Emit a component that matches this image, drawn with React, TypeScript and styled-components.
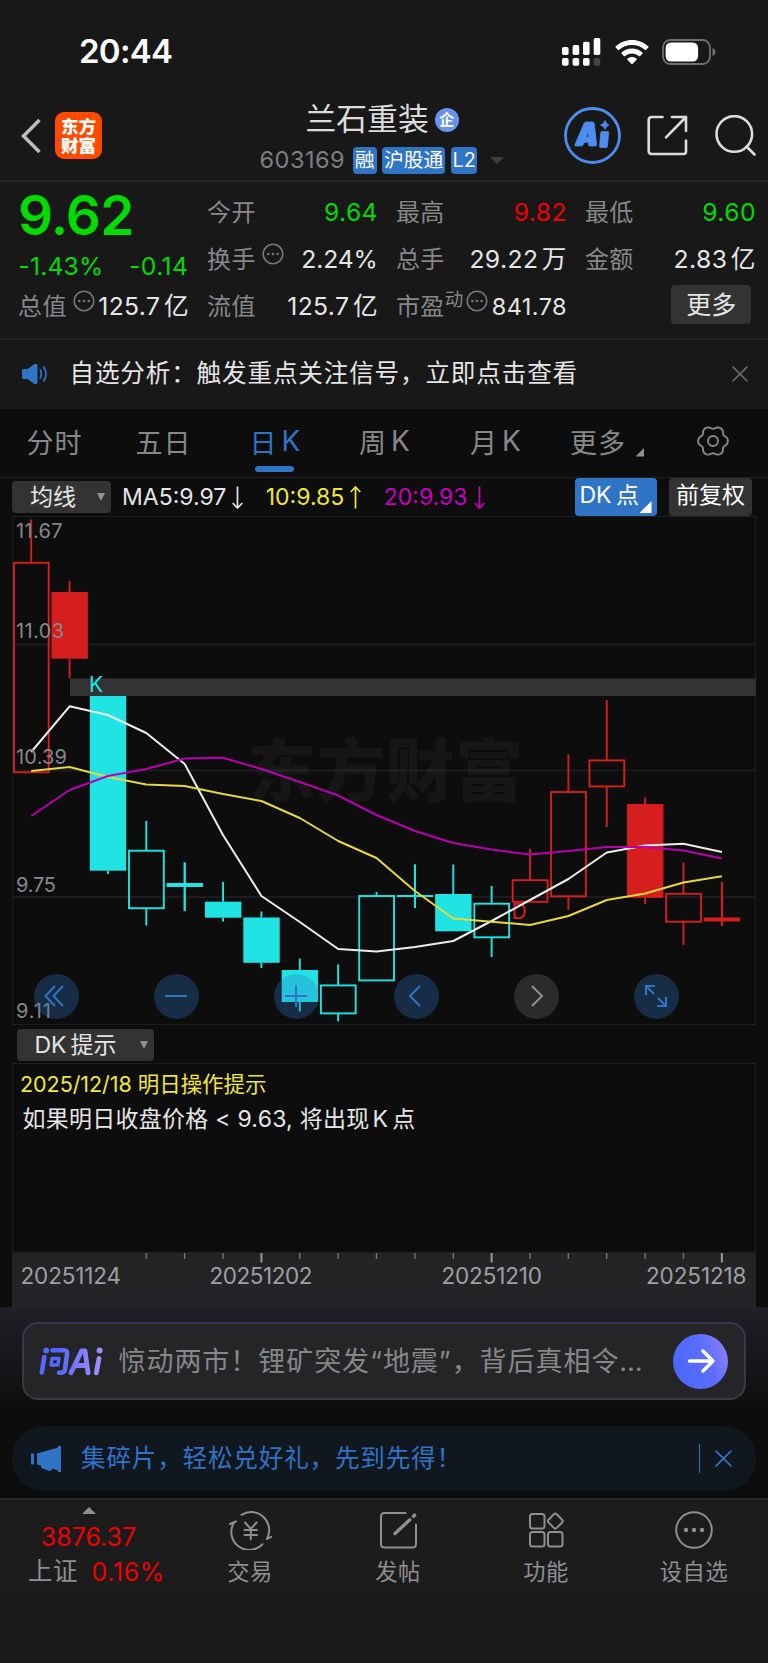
import React from 'react';
import styled, { createGlobalStyle } from 'styled-components';

const BLUE = '#2f74c5';
const GREEN = '#00dc00';
const RED = '#f00000';
const GREY = '#87878c';
const LIGHT = '#e6e6e6';
const CYAN = '#20e4e4';
const CRIMSON = '#d61e1e';
const YELLOW = '#f0e63c';
const MAGENTA = '#c800c0';

const GlobalStyle = createGlobalStyle`
  * { box-sizing: border-box; }
  body { margin: 0; background: #0d0d0d; }
  svg { display: block; flex: none; }
`;

const Screen = styled.div`
  width: 768px;
  height: 1663px;
  display: flex;
  flex-direction: column;
  background: #0d0d0d;
  color: ${LIGHT};
  font-family: Inter, 'Noto Sans CJK SC', sans-serif;
  overflow: hidden;
  white-space: nowrap;
`;

const Text = styled.span<{ $size: number; $color?: string; $ls?: number; $weight?: number; $ml?: number; $pb?: number; $pt?: number }>`
  font-size: ${p => p.$size}px;
  line-height: 1.2;
  color: ${p => p.$color ?? LIGHT};
  letter-spacing: ${p => p.$ls ?? 0}px;
  font-weight: ${p => p.$weight ?? 400};
  margin-left: ${p => p.$ml ?? 0}px;
  padding-top: ${p => p.$pt ?? 0}px;
  padding-bottom: ${p => p.$pb ?? 0}px;
`;

const Latin = styled.span<{ $l?: number; $r?: number }>`
  margin: 0 ${p => p.$r ?? 0}px 0 ${p => p.$l ?? 0}px;
`;

/* ---------- Status bar and header ---------- */

const StatusBar = styled.div`
  height: 84px;
  padding: 20px 52px 0 79px;
  display: flex;
  align-items: center;
  justify-content: space-between;
  background: #181818;
`;

const StatusIcons = styled.div`
  display: flex;
  align-items: center;
  gap: 13.5px;
`;

const Header = styled.header`
  height: 98px;
  display: grid;
  grid-template-columns: 260px 250px 1fr;
  background: #181818;
  border-bottom: 2px solid #262626;
`;

const HeaderLeft = styled.div`
  display: flex;
  align-items: center;
  gap: 14.5px;
  padding: 7px 0 0 20.5px;
`;

const AppLogo = styled.div`
  width: 47px;
  height: 47px;
  border-radius: 9px;
  background: #ff4a00;
  color: #fff;
  font-size: 17.5px;
  line-height: 19px;
  font-weight: 900;
  display: flex;
  flex-direction: column;
  align-items: center;
  justify-content: center;
`;

const HeaderCenter = styled.div`
  display: flex;
  flex-direction: column;
`;

const TitleRow = styled.div`
  display: flex;
  align-items: center;
  height: 42px;
  margin-top: 14.5px;
  padding-left: 45.5px;
`;

const CompanyBadge = styled.span`
  width: 24px;
  height: 24px;
  margin-left: 6px;
  border-radius: 50%;
  background: #6a92f0;
  color: #fff;
  font-size: 15px;
  line-height: 23px;
  font-weight: 700;
  text-align: center;
`;

const CodeRow = styled.div`
  display: flex;
  align-items: center;
  height: 28px;
  margin-top: 6px;
  padding-right: 6px;
`;

const Tag = styled.span<{ $w: number; $ml: number }>`
  width: ${p => p.$w}px;
  margin-left: ${p => p.$ml}px;
  height: 27px;
  border-radius: 4px;
  background: ${BLUE};
  color: #fff;
  font-size: 19.8px;
  line-height: 27px;
  text-align: center;
`;

const CaretDown = styled.i<{ $c: string; $s: number; $h: number }>`
  border: solid transparent;
  border-width: ${p => p.$h}px ${p => p.$s}px 0;
  border-top-color: ${p => p.$c};
`;

const HeaderRight = styled.div`
  display: flex;
  align-items: center;
  padding: 7px 0 0 54px;
`;

/* ---------- Quote ---------- */

const Quote = styled.section`
  height: 158px;
  padding: 7px 13px 0 19px;
  display: grid;
  grid-template-columns: repeat(4, 169.4px);
  grid-template-rows: repeat(3, 47px);
  column-gap: 19.6px;
  background: #181818;
  border-bottom: 2px solid #202020;
`;

const PriceBlock = styled.div`
  grid-row: span 2;
  display: flex;
  flex-direction: column;
`;

const Price = styled.div`
  height: 52px;
  margin-left: -1px;
  font-size: 55px;
  line-height: 53px;
  font-weight: 600;
  letter-spacing: -0.9px;
  color: ${GREEN};
`;

const ChangeRow = styled.div`
  display: flex;
  justify-content: space-between;
  align-items: center;
  height: 32px;
  margin-top: 10px;
`;

const Cell = styled.div`
  display: flex;
  align-items: center;
  justify-content: space-between;
`;

const CellLabel = styled.span`
  display: flex;
  align-items: center;
  margin-left: -1px;
  padding-bottom: 4px;
  color: ${GREY};
  font-size: 24px;
  letter-spacing: 0.4px;
`;

const CellValue = styled.span<{ $color?: string; $small?: boolean; $tight?: boolean }>`
  margin-right: ${p => (p.$tight ? -0.4 : -0.6)}px;
  padding-top: ${p => (p.$small ? 2 : 0)}px;
  font-size: ${p => (p.$small ? 23.5 : 24.7)}px;
  line-height: 1.2;
  letter-spacing: ${p => (p.$tight ? -0.1 : 0.4)}px;
  color: ${p => p.$color ?? LIGHT};
`;

const Unit = styled.span`
  margin-left: 3.5px;
`;

const SupText = styled.span`
  font-size: 18.5px;
  margin-bottom: 13px;
`;

const MoreButton = styled.button`
  justify-self: end;
  align-self: center;
  width: 80px;
  height: 39px;
  margin-right: 4px;
  margin-top: -4px;
  padding: 0;
  border: 0;
  border-radius: 4px;
  background: #333;
  color: ${LIGHT};
  font: 400 25px/40px Inter, 'Noto Sans CJK SC', sans-serif;
`;

const Alert = styled.section`
  height: 69px;
  display: flex;
  align-items: center;
  padding: 0 20px 2px 22px;
  background: #181818;
`;

const Spacer = styled.span<{ $w?: number }>`
  flex: ${p => (p.$w ? `0 0 ${p.$w}px` : '1')};
`;

/* ---------- Tabs ---------- */

const Tabs = styled.nav`
  height: 69px;
  display: grid;
  grid-template-columns: 109px 109px 114px 105px 117px 110px 98px;
  border-bottom: 1px solid #202020;
`;

const Tab = styled.div<{ $active?: boolean }>`
  display: flex;
  align-items: center;
  justify-content: center;
  padding-bottom: 4px;
  position: relative;
  font-size: 27px;
  letter-spacing: 1px;
  color: ${p => (p.$active ? BLUE : GREY)};
  &::after {
    content: '';
    display: ${p => (p.$active ? 'block' : 'none')};
    position: absolute;
    bottom: 5px;
    left: 37px;
    width: 39px;
    height: 6px;
    border-radius: 3px;
    background: ${BLUE};
  }
`;

const MoreTabLabel = styled.span`
  margin-left: -22px;
`;

const Period = styled.span`
  margin-left: 4px;
  font-size: 28px;
  letter-spacing: 0;
`;

const Corner = styled.i<{ $c: string; $s: number }>`
  position: absolute;
  width: ${p => p.$s}px;
  height: ${p => p.$s}px;
  background: ${p => p.$c};
  clip-path: polygon(100% 0, 100% 100%, 0 100%);
`;

const TabCorner = styled(Corner)`
  right: 20px;
  top: 39px;
`;

const ToggleCorner = styled(Corner)`
  right: 5px;
  bottom: 3px;
`;

/* ---------- Chart ---------- */

const MaRow = styled.div`
  height: 38px;
  display: flex;
  align-items: center;
  padding: 0 16px 0 12px;
`;

const Select = styled.div<{ $w: number; $pl: number; $pr: number }>`
  width: ${p => p.$w}px;
  height: 32px;
  padding: 0 ${p => p.$pr}px 0 ${p => p.$pl}px;
  display: flex;
  align-items: center;
  justify-content: space-between;
  border-radius: 4px;
  background: #333;
`;

const MaValue = styled.span<{ $color: string; $ml: number }>`
  display: flex;
  align-items: center;
  margin-left: ${p => p.$ml}px;
  padding-top: 2px;
  font-size: 23px;
  line-height: 1.2;
  color: ${p => p.$color};
`;

const Toggle = styled.div<{ $on?: boolean; $w: number }>`
  position: relative;
  width: ${p => p.$w}px;
  height: 38px;
  display: flex;
  align-items: center;
  justify-content: ${p => (p.$on ? 'flex-start' : 'center')};
  padding: 0 0 2px ${p => (p.$on ? 5 : 0)}px;
  border-radius: 4px;
  background: ${p => (p.$on ? BLUE : '#333')};
  color: #fff;
  font-size: 23px;
`;

const ToggleText = styled.span`
  line-height: 1.2;
`;

const ChartBox = styled.div`
  position: relative;
  width: 744px;
  height: 509px;
  margin-left: 12px;
`;

const Controls = styled.div`
  position: absolute;
  left: 21.5px;
  top: 457.5px;
  display: flex;
  gap: 75px;
`;

const RoundButton = styled.div<{ $muted?: boolean }>`
  width: 45px;
  height: 45px;
  border-radius: 50%;
  display: flex;
  align-items: center;
  justify-content: center;
  background: ${p => (p.$muted ? 'rgba(125,125,130,0.27)' : 'rgba(48,116,198,0.3)')};
  color: ${p => (p.$muted ? '#8e8e93' : BLUE)};
`;

const HintRow = styled.div`
  height: 38px;
  padding: 4px 0 0 17px;
`;

const HintPanel = styled.div`
  width: 744px;
  height: 190px;
  margin-left: 12px;
  padding: 8px 0 0 7px;
  display: flex;
  flex-direction: column;
  gap: 8px;
  border: 1px solid #1e1e1e;
`;

const Axis = styled.div`
  height: 54px;
  width: 744px;
  margin-left: 12px;
  background: #242426;
`;

/* ---------- Prompt, notice ---------- */

const PromptArea = styled.section`
  height: 119px;
  padding: 15px 22px 0;
  background: linear-gradient(#211f27, #0d0d0d 90%);
`;

const Prompt = styled.div`
  height: 78px;
  padding: 0 16px 0 15px;
  display: flex;
  align-items: center;
  border: 2px solid transparent;
  border-radius: 16px;
  background: linear-gradient(#252527, #252527) padding-box,
    linear-gradient(#35365c, #3c383b) border-box;
`;

const PromptText = styled.span`
  margin-left: 15.5px;
  padding-top: 3px;
  font-size: 27px;
  letter-spacing: 0.95px;
  line-height: 1.2;
  color: #87878a;
`;

const SendButton = styled.div`
  width: 55px;
  height: 55px;
  border-radius: 50%;
  background: linear-gradient(70deg, #4b68fc 15%, #5c6dff 60%, #9484fb);
  display: flex;
  align-items: center;
  justify-content: center;
`;

const Notice = styled.section`
  width: 744px;
  height: 65px;
  margin: 0 0 7px 12px;
  padding: 0 24px 0 19px;
  display: flex;
  align-items: center;
  border-radius: 33px;
  background: #10171f;
`;

const NoticeDivider = styled.i`
  width: 1px;
  height: 29px;
  margin-right: 15px;
  background: ${BLUE};
`;

/* ---------- Bottom navigation ---------- */

const BottomNav = styled.nav`
  height: 101px;
  padding-left: 14px;
  display: grid;
  grid-template-columns: 162px repeat(4, 148px);
  background: #1c1c1c;
  border-top: 2px solid #2a2a2a;
`;

const IndexItem = styled.div`
  width: 149px;
  display: flex;
  flex-direction: column;
  align-items: center;
  padding-top: 7px;
`;

const CaretUp = styled.i`
  margin-bottom: 6px;
  border: solid transparent;
  border-width: 0 7px 7px;
  border-bottom-color: #8e8e93;
`;

const IndexLine = styled.div<{ $shift?: number }>`
  height: 34.5px;
  display: flex;
  align-items: center;
  padding-left: ${p => p.$shift ?? 0}px;
`;

const NavItem = styled.div`
  display: flex;
  flex-direction: column;
  align-items: center;
  padding-top: 9.5px;
  color: #8e8e93;
  font-size: 22.3px;
  line-height: 28px;
`;

const NavLabel = styled.span`
  margin-top: 8.5px;
  letter-spacing: 0.5px;
`;

const HomeArea = styled.div`
  flex: 1;
  background: #1a1a1a;
`;

/* ---------- Drawings ---------- */

const DotsSvg = styled.svg<{ $ml: number }>`
  margin-left: ${p => p.$ml}px;
  margin-bottom: 8px;
`;

const Dots = ({ ml }: { ml: number }) => (
  <DotsSvg $ml={ml} width="22" height="22" viewBox="0 0 22 22">
    <circle cx="11" cy="11" r="9.8" fill="none" stroke="#77777b" strokeWidth="1.6" />
    <circle cx="6.3" cy="11" r="1.3" fill="#77777b" />
    <circle cx="11" cy="11" r="1.3" fill="#77777b" />
    <circle cx="15.7" cy="11" r="1.3" fill="#77777b" />
  </DotsSvg>
);

const SignalIcon = () => (
  <svg width="39" height="28" viewBox="0 0 39 28" fill="#fff">
    <rect x="0" y="9" width="6.6" height="8" rx="1.8" />
    <rect x="10.6" y="7" width="6.6" height="10" rx="1.8" />
    <rect x="21" y="3.8" width="6.6" height="13.2" rx="1.8" />
    <rect x="31.7" y="0" width="6.6" height="17" rx="1.8" />
    <rect x="0" y="20" width="6.6" height="7.8" rx="1.8" />
    <rect x="10.6" y="20" width="6.6" height="7.8" rx="1.8" />
    <rect x="21" y="20" width="6.6" height="7.8" rx="1.8" />
    <rect x="31.7" y="20" width="6.6" height="7.8" rx="1.8" fill="#444" />
  </svg>
);

const WifiIcon = () => (
  <svg width="34" height="25" viewBox="0 0 34 25" fill="#fff">
    <path d="M17 0C10.7 0 5 2.4.7 6.3c-.4.4-.4.9 0 1.3l2.2 2.2c.4.4.9.4 1.3 0C7.6 6.7 12.1 5 17 5s9.4 1.7 12.8 4.8c.4.4.9.4 1.3 0l2.2-2.2c.4-.4.4-.9 0-1.3C29 2.4 23.3 0 17 0z" />
    <path d="M17 8.5c-4 0-7.6 1.5-10.4 3.9-.4.4-.4 1 0 1.3l2.3 2.3c.3.4.9.4 1.3 0 1.8-1.6 4.2-2.5 6.8-2.5s5 .9 6.8 2.5c.4.4 1 .4 1.3 0l2.3-2.3c.4-.3.4-.9 0-1.3C24.6 10 21 8.5 17 8.5z" />
    <path d="M17 17c-1.7 0-3.3.6-4.5 1.5-.4.3-.4.9-.1 1.3l3.9 4c.4.4 1 .4 1.4 0l3.9-4c.3-.4.3-1-.1-1.3C20.3 17.6 18.7 17 17 17z" />
  </svg>
);

const BatteryIcon = () => (
  <svg width="54" height="26" viewBox="0 0 54 26">
    <rect x="1" y="1" width="47" height="24" rx="7.5" fill="none" stroke="#6f6f6f" strokeWidth="1.8" />
    <rect x="3.6" y="3.6" width="32.5" height="18.8" rx="5.2" fill="#fff" />
    <path d="M50.5 9v8c1.8-.6 3-2.2 3-4s-1.200-3.400-3-4z" fill="#6f6f6f" />
  </svg>
);

const AiCircle = () => (
  <svg width="57" height="57" viewBox="0 0 57 57">
    <circle cx="28.5" cy="28.500" r="27" fill="none" stroke="#4d8df0" strokeWidth="2.8" />
    <g fill="#4d8df0" stroke="#4d8df0" strokeWidth="0.8" strokeLinejoin="round">
      <path
        d="M22 15H28.500Q30 15 30.200 16.400L32.600 37.300Q32.800 39 31.100 39H26Q24.600 39 24.500 37.800L24.300 35.300H20L19 37.900Q18.500 39 17.300 39H12Q10.200 39 11 37.400L20 16.500Q20.600 15 22 15ZM24.200 24.800L22.200 30.200H24.700Z"
        fillRule="evenodd"
      />
      <path d="M38 24.500H43.500Q44.800 24.500 44.600 25.800L43.400 39.400Q43.200 40.600 42 40.600H36.800Q35.400 40.600 35.600 39.300L36.800 25.700Q37 24.500 38 24.500Z" />
      <path d="M41 13.500Q42 17 45 18Q42 19 41 22.300Q40 19 36.500 18Q40 17 41 13.500Z" />
    </g>
  </svg>
);

const ShareSvg = styled.svg`
  margin-left: 26px;
`;

const ShareIcon = () => (
  <ShareSvg width="41" height="41" viewBox="0 0 41 41" fill="none" stroke="#dcdcdc" strokeWidth="2.6" strokeLinecap="round" strokeLinejoin="round">
    <path d="M15.5 2H4.5A3 3 0 0 0 1.7 4.8V36A3 3 0 0 0 4.5 39H36.5A2.5 2.5 0 0 0 39 36.5V25.5" />
    <path d="M25 2H39V16M39 2L19 22.3" />
  </ShareSvg>
);

const SearchSvg = styled.svg`
  margin-left: 27px;
`;

const SearchIcon = () => (
  <SearchSvg width="42" height="42" viewBox="0 0 42 42" fill="none" stroke="#dcdcdc" strokeWidth="2.6" strokeLinecap="round">
    <circle cx="19.3" cy="19" r="17.8" />
    <path d="M31.5 31.5L39.5 39.5" />
  </SearchSvg>
);

const SpeakerIcon = () => (
  <svg width="26" height="22" viewBox="0 0 26 22">
    <path d="M1.5 6H5.5L12.5 1Q15.5 0 15.5 2.5V19.5Q15.5 22 12.5 21L5.5 16H1.5Q0 16 0 14.5V7.5Q0 6 1.5 6z" fill={BLUE} />
    <path d="M18.300 7Q20.300 11 18.300 15M21.700 4Q26.300 11 21.700 18" fill="none" stroke={BLUE} strokeWidth="1.8" strokeLinecap="round" />
  </svg>
);

const CloseIcon = ({ size, color }: { size: number; color: string }) => (
  <svg width={size} height={size} viewBox="0 0 16 16" stroke={color} strokeWidth="1.6" strokeLinecap="round">
    <path d="M1 1L15 15M15 1L1 15" />
  </svg>
);

const gearOutline = Array.from({ length: 72 }, (_, i) => {
  const a = (i * Math.PI) / 36;
  const r = 13.7 + 1.4 * Math.cos(6 * a) - 0.25 * Math.cos(12 * a);
  return `${(16 + r * Math.cos(a)).toFixed(2)},${(16 + r * Math.sin(a)).toFixed(2)}`;
}).join(' ');

const GearIcon = () => (
  <svg width="32" height="32" viewBox="0 0 32 32" fill="none" stroke={GREY} strokeWidth="1.9">
    <polygon points={gearOutline} strokeLinejoin="round" />
    <circle cx="16" cy="16" r="5" />
  </svg>
);

type Candle = { hi: number; top: number; bot: number; lo: number; up: boolean; c: string };
const candle = (hi: number, top: number, bot: number, lo: number, up: boolean, c: string): Candle => ({ hi, top, bot, lo, up, c });

const CANDLES: Candle[] = [
  candle(519.5, 562.8, 772.3, 772.3, true, CRIMSON),
  candle(580.7, 592, 658.7, 678, false, CRIMSON),
  candle(696, 696, 870.7, 874, false, CYAN),
  candle(821, 850.7, 908.2, 925.5, true, CYAN),
  candle(862.5, 883, 887, 911, false, CYAN),
  candle(882, 901.7, 917.7, 921.5, false, CYAN),
  candle(911.5, 917.5, 962.8, 968, false, CYAN),
  candle(958.5, 970, 1002, 1011.5, false, CYAN),
  candle(964.5, 985.4, 1013.4, 1021.5, true, CYAN),
  candle(892, 896, 980.4, 980.4, true, CYAN),
  candle(864.5, 895, 897, 908, false, CYAN),
  candle(864.5, 894, 931.3, 931.3, false, CYAN),
  candle(886, 903.7, 937.3, 957, true, CYAN),
  candle(849, 880.2, 901.8, 901.8, true, CRIMSON),
  candle(754.5, 792, 896.3, 910, true, CRIMSON),
  candle(700, 760.4, 786.4, 827, true, CRIMSON),
  candle(797.5, 804, 897.8, 904, false, CRIMSON),
  candle(862.5, 893.8, 921.7, 945, true, CRIMSON),
  candle(882, 917.5, 921.5, 925.7, false, CRIMSON),
];

const MA5 = [752, 706.3, 715, 733, 764, 835, 896, 922, 949, 951.5, 947, 941, 921, 900, 879, 852.5, 845.5, 843.7, 852];
const MA10 = [771, 767, 777, 784.5, 786, 794, 801, 818, 841, 858, 891, 918.5, 921.7, 925, 916, 900, 893.5, 882.5, 876.3];
const MA20 = [816, 790, 776, 769, 758.5, 757.7, 769, 782, 795.5, 815, 831, 843, 849.5, 854.5, 851, 847, 847, 850.5, 858.5];

const xAt = (i: number) => 31.2 + i * 38.37;
const line = (ys: number[]) => ys.map((y, i) => `${xAt(i).toFixed(1)},${y}`).join(' ');

const PRICE_LABELS: [string, number, number][] = [
  ['11.67', 538.3, 46.5],
  ['11.03', 638, 48],
  ['10.39', 764.3, 51],
  ['9.75', 891.5, 40],
  ['9.11', 1017.7, 35],
];

const CandleChart = () => (
  <svg width="744" height="509" viewBox="12 516 744 509">
    <rect x="12.5" y="516.5" width="743" height="508" fill="none" stroke="#1e1e1e" />
    {[644.5, 770.5, 897].map(y => (
      <line key={y} x1="12" x2="756" y1={y} y2={y} stroke="#1c1c1c" strokeWidth="2" />
    ))}
    <text x="248" y="796" fontSize="68" fontWeight="900" textLength="275" fill="#fff" fillOpacity="0.04">东方财富</text>
    <rect x="70" y="678.5" width="686" height="17.5" fill="#333" />
    {CANDLES.map((k, i) => {
      const x = xAt(i);
      return (
        <g key={i} stroke={k.c} strokeWidth="1.9" fill="none">
          {k.hi < k.top && <line x1={x} x2={x} y1={k.hi} y2={k.top} />}
          {k.lo > k.bot && <line x1={x} x2={x} y1={k.bot} y2={k.lo} />}
          {k.up ? (
            <rect x={x - 17.3} y={k.top} width="34.8" height={k.bot - k.top} />
          ) : (
            <rect x={x - 18.1} y={k.top} width="36.4" height={k.bot - k.top} fill={k.c} stroke="none" />
          )}
          {!k.up && k.bot - k.top < 5 && <line x1={x} x2={x} y1={k.hi} y2={k.lo} />}
        </g>
      );
    })}
    <text x="89" y="691.5" fontSize="21" fill={CYAN}>K</text>
    <text x="511.5" y="918.5" fontSize="21" fill={CRIMSON}>D</text>
    <g fill="none" strokeWidth="2" strokeLinejoin="round">
      <polyline points={line(MA5)} stroke="#ededed" />
      <polyline points={line(MA10)} stroke="#e6d840" />
      <polyline points={line(MA20)} stroke="#b800b0" />
    </g>
    {PRICE_LABELS.map(([t, y, w]) => (
      <text key={t} x="16" y={y} fontSize="20" fill="#87878c" textLength={w}>{t}</text>
    ))}
  </svg>
);

const DATES: [string, number][] = [
  ['20251124', 20.5],
  ['20251202', 209.5],
  ['20251210', 441.5],
  ['20251218', 646],
];

const AxisScale = () => (
  <svg width="744" height="54" viewBox="12 1253 744 54">
    {Array.from({ length: 16 }, (_, k) => k + 3).map(i => {
      const major = i % 6 === 0;
      return (
        <line key={i} x1={xAt(i)} x2={xAt(i)} y1="1253" y2={major ? 1262.5 : 1259} stroke={major ? '#98989c' : '#707074'} strokeWidth={major ? 2 : 1.5} />
      );
    })}
    {DATES.map(([d, x]) => (
      <text key={d} x={x} y="1284.2" fontSize="22.5" fill="#9f9fa3" textLength={d === '20251202' ? 103 : 100.5}>{d}</text>
    ))}
  </svg>
);

const Glyph = ({ d, w = 2 }: { d: string; w?: number }) => (
  <svg width="24" height="24" viewBox="0 0 24 24" fill="none" stroke="currentColor" strokeWidth={w}>
    <path d={d} />
  </svg>
);

const DOWN = 'M11.5 0.5V22M6.7 17L11.5 22L16.3 17';
const UP = 'M11.5 22.5V1M6.7 6L11.5 1L16.3 6';

const AskAiLogo = () => (
  <svg width="64" height="29" viewBox="0 0 64 29" fill="none" stroke="url(#ask)" strokeWidth="4.6" strokeLinecap="round" strokeLinejoin="round">
    <defs>
      <linearGradient id="ask" x1="0" y1="0" x2="64" y2="0" gradientUnits="userSpaceOnUse">
        <stop offset="0.3" stopColor="#5468ff" />
        <stop offset="1" stopColor="#a990f8" />
      </linearGradient>
    </defs>
    <path d="M5.3 10L2.8 25.5M13.5 3.2H25Q28.6 3.2 28 7L26 22Q25.4 25.8 21.5 25.8H20" />
    <path d="M13 11.5H20L18.8 18H12Z" strokeWidth="3.4" />
    <path d="M32 25.8L42.5 4H46L49 25.8M37.5 18.5H47M60 11.5L57.3 25.8" strokeWidth="4.8" />
    <g fill="url(#ask)" stroke="none">
      <circle cx="7.2" cy="3.400" r="2.9" />
      <circle cx="60.6" cy="3.400" r="3" />
    </g>
  </svg>
);

const MegaphoneIcon = () => (
  <svg width="31" height="26" viewBox="0 0 31 26" fill={BLUE}>
    <rect x="0" y="7.5" width="3" height="11" />
    <path d="M6 7.500L27 1.500V0H30V26H27V24.500L21.500 22.500Q20.500 25.500 17 24.500L12 22.800Q9.500 22 10 19.500L6 18.500Z" />
  </svg>
);

const NavSvg = ({ children }: { children: React.ReactNode }) => (
  <svg width="44" height="40" viewBox="0 0 44 40" fill="none" stroke="#8e8e93" strokeWidth="2" strokeLinecap="round" strokeLinejoin="round">
    {children}
  </svg>
);

const TradeIcon = () => (
  <NavSvg>
    <path d="M13.5 4.8A18 18 0 0 1 39.5 27.5M38.8 29L43 26.8" />
    <path d="M34.5 34.2A18 18 0 0 1 6 12.500M2 14L8 11.300" />
    <path d="M17 12.500L22.800 19L28.500 12.500M22.800 19V29.500M16.500 20H29M16.500 25H29" />
  </NavSvg>
);

const PostIcon = () => (
  <NavSvg>
    <path d="M29.5 3H8.5Q5 3 5 6.500V34Q5 37.500 8.500 37.500H36.500Q40 37.500 40 34V14.500" />
    <path d="M19 23.500L33.800 9.800" strokeWidth="3.4" />
    <path d="M37.500 6.300L38.600 5.200" strokeWidth="3.6" />
  </NavSvg>
);

const FeaturesIcon = () => (
  <NavSvg>
    <rect x="6" y="4" width="14.5" height="14.5" rx="2.5" />
    <rect x="6" y="22" width="14.5" height="14.5" rx="2.5" />
    <rect x="24" y="22" width="14.5" height="14.5" rx="2.5" />
    <rect x="25.5" y="5.3" width="11.6" height="11.6" rx="2" transform="rotate(45 31.3 11.1)" />
  </NavSvg>
);

const MoreIcon = () => (
  <NavSvg>
    <circle cx="22" cy="20" r="17.8" />
    <g fill="#8e8e93" stroke="none">
      <circle cx="14" cy="20" r="2.2" />
      <circle cx="22" cy="20" r="2.2" />
      <circle cx="30" cy="20" r="2.2" />
    </g>
  </NavSvg>
);

type QuoteField = { label: string; value: string; unit?: string; color?: string; dots?: boolean; sup?: string; tight?: boolean };

const FIELDS: QuoteField[] = [
  { label: '今开', value: '9.64', color: GREEN },
  { label: '最高', value: '9.82', color: RED },
  { label: '最低', value: '9.60', color: GREEN },
  { label: '换手', value: '2.24%', dots: true, tight: true },
  { label: '总手', value: '29.22', unit: '万' },
  { label: '金额', value: '2.83', unit: '亿' },
  { label: '总值', value: '125.7', unit: '亿', dots: true },
  { label: '流值', value: '125.7', unit: '亿' },
  { label: '市盈', value: '841.78', dots: true, sup: '动' },
];

const Field = ({ f }: { f: QuoteField }) => (
  <Cell>
    <CellLabel>
      {f.label}
      {f.sup && <SupText>{f.sup}</SupText>}
      {f.dots && <Dots ml={f.sup ? 2.5 : 6} />}
    </CellLabel>
    <CellValue $color={f.color} $small={!!f.sup} $tight={f.tight}>
      {f.value}
      {f.unit && <Unit>{f.unit}</Unit>}
    </CellValue>
  </Cell>
);

const App = () => (
  <>
    <GlobalStyle />
    <Screen>
      <StatusBar>
        <Text $size={33} $color="#fff" $weight={600} $ls={-0.7}>20:44</Text>
        <StatusIcons>
          <SignalIcon />
          <WifiIcon />
          <BatteryIcon />
        </StatusIcons>
      </StatusBar>

      <Header>
        <HeaderLeft>
          <svg width="20" height="36" viewBox="0 0 20 36" fill="none" stroke="#bdbdbd" strokeWidth="3.5">
            <path d="M18.5 2L2.5 18L18.5 34" />
          </svg>
          <AppLogo>
            <span>东方</span>
            <span>财富</span>
          </AppLogo>
        </HeaderLeft>
        <HeaderCenter>
          <TitleRow>
            <Text $size={30.8} $color="#dcdcdc">兰石重装</Text>
            <CompanyBadge>企</CompanyBadge>
          </TitleRow>
          <CodeRow>
            <Text $size={23.5} $color="#7d7d82" $ml={-0.5} $ls={0.5}>603169</Text>
            <Tag $w={24} $ml={7.5}>融</Tag>
            <Tag $w={63} $ml={5.5}>沪股通</Tag>
            <Tag $w={26} $ml={6}>L2</Tag>
            <Spacer />
            <CaretDown $c="#3e3e3e" $s={7} $h={7} />
          </CodeRow>
        </HeaderCenter>
        <HeaderRight>
          <AiCircle />
          <ShareIcon />
          <SearchIcon />
        </HeaderRight>
      </Header>

      <Quote>
        <PriceBlock>
          <Price>9.62</Price>
          <ChangeRow>
            <Text $size={24.7} $color={GREEN} $ls={0.15} $ml={-0.5}>-1.43%</Text>
            <Text $size={24.7} $color={GREEN} $ls={0.4}>-0.14</Text>
          </ChangeRow>
        </PriceBlock>
        {FIELDS.map(f => (
          <Field key={f.label} f={f} />
        ))}
        <MoreButton>更多</MoreButton>
      </Quote>

      <Alert>
        <SpeakerIcon />
        <Text $size={24.6} $ml={21.5} $ls={0.83}>自选分析：触发重点关注信号，立即点击查看</Text>
        <Spacer />
        <CloseIcon size={16} color="#6f6f73" />
      </Alert>

      <Tabs>
        <Tab>分时</Tab>
        <Tab>五日</Tab>
        <Tab $active>
          日<Period>K</Period>
        </Tab>
        <Tab>
          周<Period>K</Period>
        </Tab>
        <Tab>
          月<Period>K</Period>
        </Tab>
        <Tab>
          <MoreTabLabel>更多</MoreTabLabel>
          <TabCorner $c="#8e8e93" $s={8.5} />
        </Tab>
        <Tab>
          <GearIcon />
        </Tab>
      </Tabs>

      <MaRow>
        <Select $w={98.5} $pl={18} $pr={6}>
          <Text $size={23} $pt={1}>均线</Text>
          <CaretDown $c="#8e8e93" $s={4.5} $h={8} />
        </Select>
        <MaValue $color={LIGHT} $ml={11.5}>
          MA5:9.97
          <Glyph d={DOWN} w={1.7} />
        </MaValue>
        <MaValue $color={YELLOW} $ml={15.5}>
          10:9.85
          <Glyph d={UP} w={1.7} />
        </MaValue>
        <MaValue $color={MAGENTA} $ml={15.5}>
          20:9.93
          <Glyph d={DOWN} w={1.7} />
        </MaValue>
        <Spacer />
        <Toggle $on $w={82}>
          <ToggleText>
            DK<Latin $l={4.5}>点</Latin>
          </ToggleText>
          <ToggleCorner $c="#fff" $s={12} />
        </Toggle>
        <Spacer $w={12.5} />
        <Toggle $w={83}>
          <ToggleText>前复权</ToggleText>
        </Toggle>
      </MaRow>

      <ChartBox>
        <CandleChart />
        <Controls>
          <RoundButton>
            <Glyph d="M11 2L1.5 12L11 22M19 2L9.500 12L19 22" />
          </RoundButton>
          <RoundButton>
            <Glyph d="M1 12H23" />
          </RoundButton>
          <RoundButton>
            <Glyph d="M1 12H23M12 1V23" />
          </RoundButton>
          <RoundButton>
            <Glyph d="M16 2L6 12L16 22" />
          </RoundButton>
          <RoundButton $muted>
            <Glyph d="M8 2L18 12L8 22" />
          </RoundButton>
          <RoundButton>
            <Glyph d="M2 11V2H11M2 2L10 10M22 13V22H13M22 22L14 14" />
          </RoundButton>
        </Controls>
      </ChartBox>

      <HintRow>
        <Select $w={137} $pl={17.5} $pr={6}>
          <Text $size={23} $pt={1}>
            DK<Latin $l={4}>提示</Latin>
          </Text>
          <CaretDown $c="#8e8e93" $s={4.5} $h={8} />
        </Select>
      </HintRow>
      <HintPanel>
        <Text $size={21.5} $color={YELLOW} $ls={-0.05}>2025/12/18 明日操作提示</Text>
        <Text $size={23} $ml={2.5} $ls={0.25}>
          如果明日收盘价格 &lt; 9.63, 将出现<Latin $l={3} $r={4}>K</Latin>点
        </Text>
      </HintPanel>
      <Axis>
        <AxisScale />
      </Axis>

      <PromptArea>
        <Prompt>
          <AskAiLogo />
          <PromptText>惊动两市！锂矿突发“地震”，背后真相令…</PromptText>
          <Spacer />
          <SendButton>
            <svg width="30" height="26" viewBox="0 0 30 26" fill="none" stroke="#fff" strokeWidth="3.5" strokeLinecap="round" strokeLinejoin="round">
              <path d="M3.500 13H27M17 3L27 13L17 23" />
            </svg>
          </SendButton>
        </Prompt>
      </PromptArea>

      <Notice>
        <MegaphoneIcon />
        <Text $size={24.6} $color={BLUE} $ml={19} $ls={0.8} $pt={1}>集碎片，轻松兑好礼，先到先得！</Text>
        <Spacer />
        <NoticeDivider />
        <CloseIcon size={17} color={BLUE} />
      </Notice>

      <BottomNav>
        <IndexItem>
          <CaretUp />
          <IndexLine>
            <Text $size={25} $color={RED}>3876.37</Text>
          </IndexLine>
          <IndexLine $shift={16}>
            <Text $size={24.5} $color="#8e8e93" $ls={0.5}>上证</Text>
            <Text $size={25} $color={RED} $ml={13.5} $ls={0.6}>0.16%</Text>
          </IndexLine>
        </IndexItem>
        <NavItem>
          <TradeIcon />
          <NavLabel>交易</NavLabel>
        </NavItem>
        <NavItem>
          <PostIcon />
          <NavLabel>发帖</NavLabel>
        </NavItem>
        <NavItem>
          <FeaturesIcon />
          <NavLabel>功能</NavLabel>
        </NavItem>
        <NavItem>
          <MoreIcon />
          <NavLabel>设自选</NavLabel>
        </NavItem>
      </BottomNav>
      <HomeArea />
    </Screen>
  </>
);

export default App;
